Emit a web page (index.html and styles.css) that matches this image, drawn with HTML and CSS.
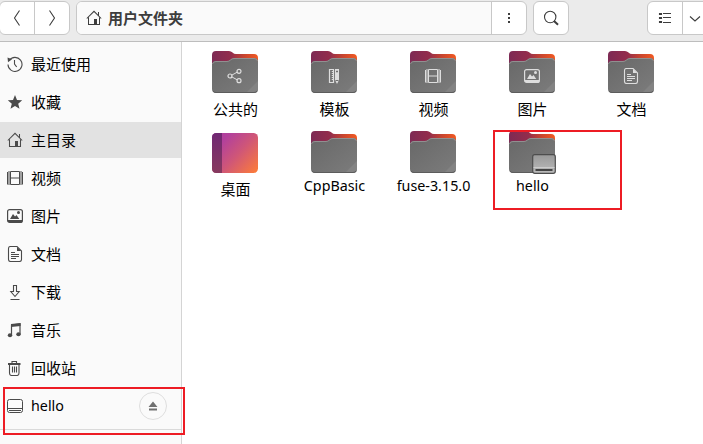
FILE: index.html
```html
<!DOCTYPE html>
<html lang="zh-CN">
<head>
<meta charset="utf-8">
<title>用户文件夹</title>
<link rel="stylesheet" href="styles.css">
</head>
<body>
<svg class="defs" aria-hidden="true">
  <defs>
    <linearGradient id="back" x1="0" x2="1"><stop offset="0" stop-color="#7d2a54"/><stop offset=".42" stop-color="#932d4c"/><stop offset=".7" stop-color="#c8452f"/><stop offset="1" stop-color="#f25a22"/></linearGradient>
    <linearGradient id="front" x1="0" x2="1" y2="1"><stop offset="0" stop-color="#686868"/><stop offset="1" stop-color="#7c7c7c"/></linearGradient>
    <linearGradient id="desk" x1="0" x2="1" y1=".1" y2=".9"><stop offset="0" stop-color="#ac3b9e"/><stop offset=".2" stop-color="#b3419b"/><stop offset=".55" stop-color="#cf5678"/><stop offset="1" stop-color="#fa7a3d"/></linearGradient>
    <linearGradient id="deskbar" x2="0" y2="1"><stop offset="0" stop-color="#702873"/><stop offset="1" stop-color="#873a5e"/></linearGradient>
    <linearGradient id="disk" x2="0" y2="1"><stop offset="0" stop-color="#999"/><stop offset="1" stop-color="#bbb"/></linearGradient>
  </defs>
  <symbol id="folder" viewBox="0 0 48 48">
    <path d="M1 7q0-4 4-4h13q2 0 3.500 1.500T25 6h18q4 0 4 4v8H1z" fill="url(#back)"/>
    <path d="M1 17q0-4 4-4h11q2 0 3.500-1.500T23 10h20q4 0 4 4v27q0 4-4 4H5q-4 0-4-4z" fill="url(#front)"/>
    <path d="M1.500 16q.500-2.500 3.500-2.500h11q2 0 3.500-1.500T23 10.500h20q3 0 3.500 2.500" fill="none" stroke="#909090"/>
    <path d="M47 33v8q0 4-4 4h-8z" fill="#838383"/>
    <path d="M2 43q1 1.500 3 1.500h38q2 0 3-1.500" fill="none" stroke="#5c5c5c"/>
  </symbol>
  <symbol id="home" viewBox="0 0 16 16"><path d="M.800 8.500 8 1.300l7.200 7.200M2.500 7.500v7h11v-7M12.500 2v3.500" fill="none" stroke="currentColor" stroke-width="1.050"/><path d="M8 9h3v6H8z" fill="currentColor"/></symbol>
  <symbol id="recent" viewBox="0 0 16 16"><path d="M2.200 4.500A7 7 0 1 1 1 8.500M7.500 4v4l2.200 3" fill="none" stroke="currentColor" stroke-width="1.100"/><path d="M.500 1.500 5 3.200 1 6.200z" fill="currentColor"/></symbol>
  <symbol id="star" viewBox="0 0 16 16"><path d="m8 1 2 4.900 5.200.4-4 3.400 1.300 5.100L8 12l-4.500 2.800 1.300-5.100-4-3.400L6 5.900z" fill="currentColor"/></symbol>
  <symbol id="film" viewBox="0 0 16 16"><path d="M.500 2v12.500M15.500 2v12.500M3.500 1.500v13h9v-13zM3.500 8h9" fill="none" stroke="currentColor"/><path d="M2 1.500v13M14 1.500v13" fill="none" stroke="currentColor" stroke-width="2" stroke-dasharray="1 1"/></symbol>
  <symbol id="image" viewBox="0 0 16 16"><rect x=".600" y="1.600" width="14.800" height="12.800" rx="2" fill="none" stroke="currentColor" stroke-width="1.200"/><path d="M1 12h14v2H1zM3 11l3-5 2 2.500L9.500 7l2.800 4z" fill="currentColor"/><circle cx="11.500" cy="4.500" r="1.500" fill="currentColor"/></symbol>
  <symbol id="doc" viewBox="0 0 16 16"><path d="M3.500.500H10L14.500 5v8.500q0 2-2 2h-9q-2 0-2-2v-11q0-2 2-2z" fill="none" stroke="currentColor" stroke-width="1.100"/><path d="M10 1v4h4zM4 6h4v1H4zM4 8h8v1H4zM4 10h8v1H4zM4 12h5v1H4z" fill="currentColor"/></symbol>
  <symbol id="download" viewBox="0 0 16 16"><path d="M6.500 1.500h3v6h2.700L8 12.500 3.800 7.500h2.700zM3.500 15.500h9" fill="none" stroke="currentColor" stroke-width="1.100"/></symbol>
  <symbol id="music" viewBox="0 0 16 16"><path d="M4.500 13V3l8.500-1v10" fill="none" stroke="currentColor" stroke-width="1.200"/><path d="m4 2 9.600-1v3L4 5z" fill="currentColor"/><ellipse cx="3" cy="13.200" rx="2.200" ry="2" fill="currentColor"/><ellipse cx="11.500" cy="12.200" rx="2.200" ry="2" fill="currentColor"/></symbol>
  <symbol id="trash" viewBox="0 0 16 16"><path d="M1 3h12.500v2H1z" fill="currentColor"/><path d="M5 3V1.500h4.500V3M2.500 5v8q0 2.500 2 2.500H10q2 0 2-2.500V5M5.500 6.500v6M7.500 6.500v6M9.500 6.500v6" fill="none" stroke="currentColor" stroke-width="1.100"/></symbol>
  <symbol id="drive" viewBox="0 0 16 16"><rect x=".500" y="1.500" width="15" height="13" rx="2" fill="none" stroke="currentColor"/><path d="M1 10.500h14M2 12.500h12" stroke="currentColor"/></symbol>
  <symbol id="share" viewBox="0 0 16 16"><path d="m4.500 7.300 6-3.300M4.500 8.700l6 3.300" stroke="currentColor"/><g fill="none" stroke="currentColor" stroke-width="1.200"><circle cx="3" cy="8" r="2"/><circle cx="12" cy="3.300" r="2"/><circle cx="12" cy="12.700" r="2"/></g></symbol>
  <symbol id="template" viewBox="0 0 16 16"><path d="M3.500 1.500h4v13h-4z" fill="none" stroke="currentColor" stroke-width="1.200"/><path d="M6.500 3v10" stroke="currentColor" stroke-width="1.500" stroke-dasharray="1 1"/><path d="M9 1h4v11l-2 4-2-4z" fill="currentColor"/><path d="M10.500 3h1v1h-1zM9.500 12.500h3" stroke="#707070" fill="#707070"/></symbol>
</svg>

<header class="toolbar">
  <div class="group nav">
    <button class="btn" aria-label="后退"><svg class="i16" viewBox="0 0 16 16"><path d="M10.500.500 5.500 8l5 7.500"/></svg></button>
    <button class="btn" aria-label="前进"><svg class="i16" viewBox="0 0 16 16"><path d="m5.500.500 5 7.500-5 7.500"/></svg></button>
  </div>
  <div class="group path">
    <div class="crumb"><svg class="i16"><use href="#home"/></svg><span>用户文件夹</span></div>
    <button class="btn" aria-label="菜单"><svg class="i16 solid" viewBox="0 0 16 16"><path d="M7 3h2v2H7zM7 7h2v2H7zM7 11h2v2H7z"/></svg></button>
  </div>
  <div class="group search"><button class="btn" aria-label="搜索"><svg class="i16" viewBox="0 0 16 16"><circle cx="7.200" cy="7" r="5.700"/><path d="m11 11 4 3.700" stroke-width="2"/></svg></button></div>
  <div class="group view">
    <button class="btn" aria-label="列表"><svg class="i16" viewBox="0 0 16 16"><path d="M2.500 3.500h2v1h-2zM2.500 7.500h2v1h-2zM2.500 11.500h2v1h-2zM6 3.500h8M6 7.500h8M6 12.500h8"/></svg></button>
    <button class="btn drop" aria-label="选项"><svg class="i16" viewBox="0 0 16 16"><path d="m3 6.500 5 4.500 5-4.500"/></svg></button>
  </div>
</header>

<div class="body">
  <nav class="sidebar">
    <a class="row"><svg class="i16"><use href="#recent"/></svg>最近使用</a>
    <a class="row"><svg class="i16"><use href="#star"/></svg>收藏</a>
    <a class="row active"><svg class="i16"><use href="#home"/></svg>主目录</a>
    <a class="row"><svg class="i16"><use href="#film"/></svg>视频</a>
    <a class="row"><svg class="i16"><use href="#image"/></svg>图片</a>
    <a class="row"><svg class="i16"><use href="#doc"/></svg>文档</a>
    <a class="row"><svg class="i16"><use href="#download"/></svg>下载</a>
    <a class="row"><svg class="i16"><use href="#music"/></svg>音乐</a>
    <a class="row"><svg class="i16"><use href="#trash"/></svg>回收站</a>
    <a class="row mount"><svg class="i16"><use href="#drive"/></svg><span class="latin">hello</span>
      <span class="eject"><svg viewBox="0 0 10 10"><path d="M5 .500 9.500 6h-9zM1 7.500h8v2H1z"/></svg></span></a>
    <hr>
    <div class="mark mark-mount"></div>
  </nav>
  <main class="files">
    <div class="file"><div class="pic"><svg class="i48"><use href="#folder"/></svg><svg class="emblem"><use href="#share"/></svg></div><span>公共的</span></div>
    <div class="file"><div class="pic"><svg class="i48"><use href="#folder"/></svg><svg class="emblem"><use href="#template"/></svg></div><span>模板</span></div>
    <div class="file"><div class="pic"><svg class="i48"><use href="#folder"/></svg><svg class="emblem"><use href="#film"/></svg></div><span>视频</span></div>
    <div class="file"><div class="pic"><svg class="i48"><use href="#folder"/></svg><svg class="emblem"><use href="#image"/></svg></div><span>图片</span></div>
    <div class="file"><div class="pic"><svg class="i48"><use href="#folder"/></svg><svg class="emblem"><use href="#doc"/></svg></div><span>文档</span></div>
    <div class="file"><div class="pic"><svg class="i48" viewBox="0 0 48 48"><rect x="1" y="5" width="46" height="40" rx="4.500" fill="url(#desk)"/><path d="M11 5H5.500Q1 5 1 9.500v31Q1 45 5.500 45H11z" fill="url(#deskbar)"/></svg></div><span>桌面</span></div>
    <div class="file"><div class="pic"><svg class="i48"><use href="#folder"/></svg></div><span class="latin">CppBasic</span></div>
    <div class="file"><div class="pic"><svg class="i48"><use href="#folder"/></svg></div><span class="latin">fuse-3.15.0</span></div>
    <div class="file"><div class="pic"><svg class="i48"><use href="#folder"/></svg><svg class="badge" viewBox="0 0 24 20"><rect x=".700" y=".700" width="22.600" height="18.600" rx="2" fill="url(#disk)" stroke="#4d4d4d" stroke-width="1.200"/><path d="M1.500 13.500h21" stroke="#ccc"/><path d="M3.500 15h17v2h-17z" fill="#444"/></svg></div><span class="latin">hello</span><div class="mark mark-file"></div></div>
  </main>
</div>
</body>
</html>
```
FILE: styles.css
```css
* { box-sizing: border-box; }
body {
  margin: 0;
  width: 703px;
  height: 444px;
  overflow: hidden;
  display: flex;
  flex-direction: column;
  background: #fff;
  color: #000;
  font: 15px/20px "Noto Sans CJK SC", sans-serif;
}
.defs { position: absolute; width: 0; height: 0; }
.latin { font-family: "Noto Sans", sans-serif; font-size: 14.3px; }
.i16 { width: 16px; height: 16px; flex: none; }

.toolbar {
  flex: none;
  height: 42px;
  padding-top: 1px;
  display: flex;
  align-items: flex-start;
  background: #ebebeb;
  border-bottom: 1px solid #bdbdbd;
}
.group {
  height: 34px;
  display: flex;
  flex: none;
  border: 1px solid #c8c8c8;
  border-radius: 6px;
  background: #fff;
  overflow: hidden;
}
.nav { width: 71px; margin-left: -1px; }
.path { width: 451px; margin-left: 6px; }
.search { width: 36px; margin-left: 6px; }
.view { width: 71px; margin-left: 78px; }
.btn {
  width: 34px;
  padding: 0;
  border: 0;
  background: none;
  color: #3d3d3d;
  display: flex;
  align-items: center;
  justify-content: center;
}
.btn + .btn, .crumb + .btn { width: 35px; border-left: 1px solid #c8c8c8; }
.btn.drop { justify-content: flex-start; padding-left: 4px; }
.btn svg { fill: none; stroke: currentColor; stroke-width: 1.1; }
.btn svg.solid { fill: currentColor; stroke: none; }
.crumb {
  flex: 1;
  display: flex;
  align-items: center;
  gap: 6px;
  padding-left: 9px;
  background: #fafafa;
  color: #3d3d3d;
  font-weight: 700;
}

.body { flex: 1; display: flex; min-height: 0; }
.sidebar {
  position: relative;
  flex: none;
  width: 182px;
  padding-top: 4px;
  background: #fafafa;
  border-right: 1px solid #d4d4d4;
}
.row {
  height: 36px;
  margin-bottom: 2px;
  padding-left: 7px;
  display: flex;
  align-items: center;
  gap: 8px;
}
.row svg { color: #4a4a4a; }
.row.active { background: #e2e2e2; }
.eject {
  width: 28px;
  height: 28px;
  margin: 0 14px 0 auto;
  display: flex;
  align-items: center;
  justify-content: center;
  border: 1px solid #dedede;
  border-radius: 50%;
}
.eject svg { width: 10px; height: 10px; fill: #707070; }
hr { margin: 5px 0 0; border: 0; border-top: 1px solid #dadada; }

.files {
  display: grid;
  grid-template-columns: repeat(5, 99px);
  grid-auto-rows: 80px;
  padding: 6px 0 0 4px;
}
.file {
  position: relative;
  display: flex;
  flex-direction: column;
  align-items: center;
  white-space: nowrap;
}
.file > span { margin-top: 3px; }
.file > .latin { margin-top: 0; }
.pic { position: relative; height: 48px; margin-right: 2px; }
.i48 { display: block; width: 48px; height: 48px; }
.emblem { position: absolute; left: 16px; top: 20px; width: 16px; height: 16px; color: #dedede; }
.badge { position: absolute; left: 24px; top: 26px; width: 24px; height: 20px; }

.mark { position: absolute; border: 2px solid #ed1c24; z-index: 1; }
.mark-mount { left: 3px; top: 345px; width: 182px; height: 48px; }
.mark-file { left: 10px; top: 2px; width: 129px; height: 80px; }
```
